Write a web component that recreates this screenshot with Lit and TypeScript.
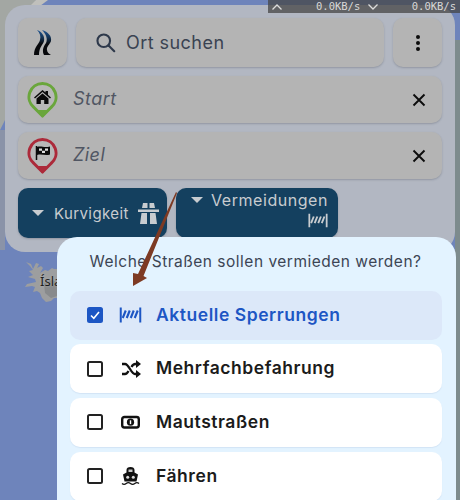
import { LitElement, html, css, svg } from "lit";
import { customElement } from "lit/decorators.js";

const barrier = svg`<path d="M1.500 0v15M21 0v15" fill="none" stroke="currentColor" stroke-width="2"/><path d="M3.500 10.500L6.500 3M7.500 10.500L10.500 3M11.500 10.500L14.500 3M15.500 10.500L18.500 3" fill="none" stroke="currentColor" stroke-width="2.100"/>`;

@customElement("app-root")
export class AppRoot extends LitElement {
  static styles = css`
    :host { display: block; width: 460px; height: 500px; font-family: Inter, "Noto Sans", sans-serif; }
    .stage { position: relative; width: 460px; height: 500px; overflow: hidden; background: #6e84bb; }
    .map { position: absolute; inset: 0; }
    .status {
      position: absolute; top: 0; right: 0; width: 192px; height: 13px; background: rgba(70,70,70,.75);
      color: #d8d8d8; font: 10.5px/13px "DejaVu Sans Mono", monospace; display: flex; justify-content: space-between; align-items: center; padding: 0 4px; box-sizing: border-box;
    }
    .status .group { display: flex; gap: 27.7px; align-items: center; }
    .status svg { width: 10px; height: 6px; }
    .panel {
      position: absolute; left: 5px; top: 5px; width: 450px; height: 247px; box-sizing: border-box; padding: 13px 13px 0;
      background: #b2b7c2; border-radius: 20px; display: flex; flex-direction: column; gap: 9px;
    }
    .row { display: flex; gap: 9px; }
    .card { background: #b4b4b4; border-radius: 10px; box-shadow: 0 1px 2px rgba(70,75,90,.3); display: flex; align-items: center; }
    .square { width: 49px; height: 49px; justify-content: center; flex: none; }
    .search { flex: 1; height: 49px; padding-left: 19px; gap: 10px; color: #3a4352; font-size: 18px; letter-spacing: .45px; }
    .search svg { width: 21px; height: 21px; }
    .place { height: 47px; padding: 0 16px 0 9px; color: #505663; font-style: italic; font-size: 18px; letter-spacing: .45px; }
    .place .label { flex: 1; margin: 0 0 2px 15px; }
    .pin { width: 31px; height: 38px; flex: none; }
    .close { width: 14px; height: 14px; }
    .btn { background: #14405f; border-radius: 10px; color: #c8ccd0; box-shadow: 0 1px 2px rgba(70,75,90,.3); box-sizing: border-box; height: 50px; }
    .btn .tri { width: 12px; height: 6px; flex: none; }
    .kurv { width: 149px; display: flex; align-items: center; padding-left: 14px; font-size: 15px; letter-spacing: .4px; }
    .kurv .t { margin-left: 10px; flex: 1; }
    .kurv svg.hw { width: 21px; height: 21px; margin-right: 8px; flex: none; }
    .verm { width: 162px; padding: 1px 10px 0 15px; display: flex; flex-direction: column; font-size: 16px; letter-spacing: .55px; }
    .verm .top { display: flex; align-items: center; justify-content: space-between; height: 22px; }
    .verm .ic { width: 20px; height: 15px; align-self: flex-end; margin-top: 2px; }
    .popup {
      position: absolute; left: 57px; top: 237px; width: 399px; height: 300px; box-sizing: border-box; padding: 13px 14px 0 13px;
      background: #e3f3ff; border-radius: 20px; display: flex; flex-direction: column; gap: 4.67px;
    }
    .q { color: #3c4554; font-size: 15.5px; letter-spacing: .5px; text-align: center; height: 36px; line-height: 23px; padding-right: 1px; }
    .item { height: 49px; flex: none; background: #fff; border-radius: 10px; display: flex; align-items: center; padding-left: 17px; color: #1b1b1b; font-weight: 600; font-size: 17.5px; letter-spacing: .55px; box-shadow: 0 1px 1px rgba(120,150,190,.15); }
    .item span { margin-bottom: 2px; }
    .item.sel { background: #dce8f9; color: #1d56c4; box-shadow: none; }
    .box { width: 16px; height: 16px; border: 2px solid #222; border-radius: 2.5px; box-sizing: border-box; flex: none; }
    .box.on { background: #1d56c4; border-color: #1d56c4; display: flex; align-items: center; justify-content: center; }
    .box svg { width: 10px; height: 10px; }
    .ico { width: 23px; height: 20px; margin: 0 14px 0 16px; flex: none; display: block; }
    .arrow { position: absolute; left: 0; top: 0; width: 460px; height: 500px; pointer-events: none; }
    .isl { position: absolute; left: 40px; top: 272px; font-size: 13px; color: #1d1d1d; font-family: "Noto Sans", sans-serif; text-shadow: 0 0 2px #b8b8b8; }
  `;

  render() {
    return html`<div class="stage">
      <svg class="map" viewBox="0 0 460 500">
        <path d="M0 0H36L32 10 5 30 5 120 0 130Z" fill="#a3a7a3"/>
        <path d="M0 130H5V250H0Z" fill="#8a93a8"/>
        <path d="M455 40H460V500H455Z" fill="#7d8b8d"/>
        <path d="M36 0H48L40 6H30Z" fill="#c0c0bc"/>
        <path d="M26 262l5 2 2 5 3-6 3 1-2 4 4-2 2 2-3 5 5-3 3 1 4-3 2 1 4 0 2 3v26h-6l-3 3-5 1-4-4-2-5-3-2-4 1 2-5-3-1-7 1 2-3 9-2-1-3-7-2 5-2-4-4 4-1-3-4z" fill="#9d9e9f"/>
        <path d="M44 283l8-3 5 2v14l-6 2-6-5z" fill="#888a8c"/>
      </svg>
      <div class="isl">Ísland</div>
      <div class="panel">
        <div class="row">
          <div class="card square">
            <svg width="24" height="28" viewBox="0 0 24 28"><defs><linearGradient id="lg" gradientUnits="userSpaceOnUse" x1="0" y1="0" x2="0" y2="15"><stop offset="0" stop-color="#1f5a9e"/><stop offset=".6" stop-color="#12304f"/><stop offset="1" stop-color="#08090c"/></linearGradient></defs><path d="M6 1C11 3 14 7 13 12 12 16 8 18 8 26H3C3 18 8 15 9 11 10 7 9 4 6 1Z" fill="url(#lg)"/><path d="M11 1C17 3 21 7 20 12 19 15 15 18 16 21 16 23 18 25 20 26H13C11 22 12 18 15 14 17 10 15 5 11 1Z" fill="url(#lg)"/></svg>
          </div>
          <div class="card search">
            <svg viewBox="0 0 24 24" fill="none" stroke="#2e394b" stroke-width="2.4" stroke-linecap="round"><circle cx="10" cy="10" r="7.2"/><path d="M15.500 15.500L22 22"/></svg>
            <span>Ort suchen</span>
          </div>
          <div class="card square">
            <svg width="6" height="18" viewBox="0 0 6 18" fill="#0c0c0c"><circle cx="3" cy="3" r="2"/><circle cx="3" cy="9" r="2"/><circle cx="3" cy="15" r="2"/></svg>
          </div>
        </div>
        <div class="card place">
          ${this.pin("#6aa63c", svg`<path d="M15.500 9L7 16.500l1 1 7.500-6.500 7.500 6.500 1-1-3-2.700V10h-2.500v1.500z" fill="#0a0a0a"/><path d="M15.500 12.500L9.500 17.500V23h4.300v-4h3.400v4h4.300v-5.500z" fill="#0a0a0a"/>`)}
          <span class="label">Start</span>
          <svg class="close" viewBox="0 0 14 14" stroke="#0c0c0c" stroke-width="1.900"><path d="M1.500 1.500L12.500 12.500M12.500 1.500L1.500 12.500"/></svg>
        </div>
        <div class="card place">
          ${this.pin("#ac2a3a", svg`<path d="M9.500 9v14" stroke="#0a0a0a" stroke-width="1.500"/><path d="M10 10c4-1.500 7 1 13-.500v8c-5 1.500-8-1-13 .500z" fill="#0a0a0a"/><path d="M12 11.500h3v2.200h-3zM18 11.500h3v2.200h-3zM15 13.700h3v2.200h-3z" fill="#ddd"/>`)}
          <span class="label">Ziel</span>
          <svg class="close" viewBox="0 0 14 14" stroke="#0c0c0c" stroke-width="1.900"><path d="M1.500 1.500L12.500 12.500M12.500 1.500L1.500 12.500"/></svg>
        </div>
        <div class="row">
          <div class="btn kurv">
            <svg class="tri" viewBox="0 0 12 6" fill="#c8ccd0"><path d="M0 0h12L6 6z"/></svg>
            <span class="t">Kurvigkeit</span>
            <svg class="hw" viewBox="0 0 21 21" fill="#c8ccd0"><path d="M5 0h4.500v5H4zM11.500 0H16l1 5h-5.500zM0 6.500h21V9H0zM3.500 10h5.500v11H2zM12 10h5.500L19 21h-7z"/></svg>
          </div>
          <div class="btn verm">
            <div class="top"><svg class="tri" viewBox="0 0 12 6" fill="#c8ccd0"><path d="M0 0h12L6 6z"/></svg><span>Vermeidungen</span></div>
            <svg class="ic" viewBox="0 0 22.500 15" style="color:#c8ccd0">${barrier}</svg>
          </div>
        </div>
      </div>
      <div class="popup">
        <div class="q">Welche Straßen sollen vermieden werden?</div>
        <div class="item sel">
          <div class="box on"><svg viewBox="0 0 10 10" fill="none" stroke="#fff" stroke-width="1.600"><path d="M1 5.500l2.800 2.800L9 2"/></svg></div>
          <svg class="ico" viewBox="0 -2.500 22.500 20" style="color:#1d56c4">${barrier}</svg>
          <span>Aktuelle Sperrungen</span>
        </div>
        <div class="item">
          <div class="box"></div>
          <svg class="ico" viewBox="0 0 23 20" fill="none" stroke="#111" stroke-width="2.300"><path d="M3 5h3c4 0 6 10 10 10h2M3 15h3c1.500 0 2.500-1 3.500-3M12.500 8c1-2 2.500-3 4-3h2"/><path d="M17 1l5 4-5 4zM17 11l5 4-5 4z" fill="#111" stroke="none"/></svg>
          <span>Mehrfachbefahrung</span>
        </div>
        <div class="item">
          <div class="box"></div>
          <svg class="ico" viewBox="0 0 23 20"><rect x="3.200" y="5" width="16.600" height="10.500" rx="2.200" fill="none" stroke="#111" stroke-width="2.400"/><circle cx="11.500" cy="10.200" r="3.600" fill="#111"/><path d="M11.500 8.300v3.800" stroke="#fff" stroke-width="1.400"/></svg>
          <span>Mautstraßen</span>
        </div>
        <div class="item">
          <div class="box"></div>
          <svg class="ico" viewBox="0 0 23 20"><path d="M7.500 6.500V4c0-2 1.500-3 4-3s4 1 4 3v2.500l3.500 2-1.500 7h-12L4 8.500z" fill="#111"/><path d="M9.500 3.500h4V6h-4z" fill="#c9c9c9"/><circle cx="8.700" cy="11.300" r="1.500" fill="#ddd"/><circle cx="14.300" cy="11.300" r="1.500" fill="#ddd"/><path d="M3 17.500q2.100 1.800 4.200 0t4.300 0 4.300 0 4.200 0" fill="none" stroke="#111" stroke-width="1.300"/></svg>
          <span>Fähren</span>
        </div>
      </div>
      <svg class="arrow" viewBox="0 0 460 500"><path d="M176 192L177 193 143.500 276 147 278 133 286 133 273 138 274z" fill="#7d3a23"/></svg>
      <div class="status">
        <div class="group"><svg viewBox="0 0 10 6" fill="none" stroke="#ddd" stroke-width="1.300"><path d="M.5 5.500L5 1l4.500 4.500"/></svg><span>&nbsp;0.0KB/s</span></div>
        <div class="group"><svg viewBox="0 0 10 6" fill="none" stroke="#ddd" stroke-width="1.300"><path d="M.5.500L5 5l4.500-4.500"/></svg><span>&nbsp;0.0KB/s</span></div>
      </div>
    </div>`;
  }

  pin(color: string, inner: unknown) {
    return html`<svg class="pin" viewBox="0 0 31 38"><path d="M15.500 2.500a13.500 13.500 0 0 1 8.500 24L15.500 35 7 26.500a13.500 13.500 0 0 1 8.500-24z" fill="#b8b8b8" stroke="${color}" stroke-width="3" stroke-linejoin="round"/><path d="M9 29h13l-6.500 7.500z" fill="${color}"/>${inner}</svg>`;
  }
}
